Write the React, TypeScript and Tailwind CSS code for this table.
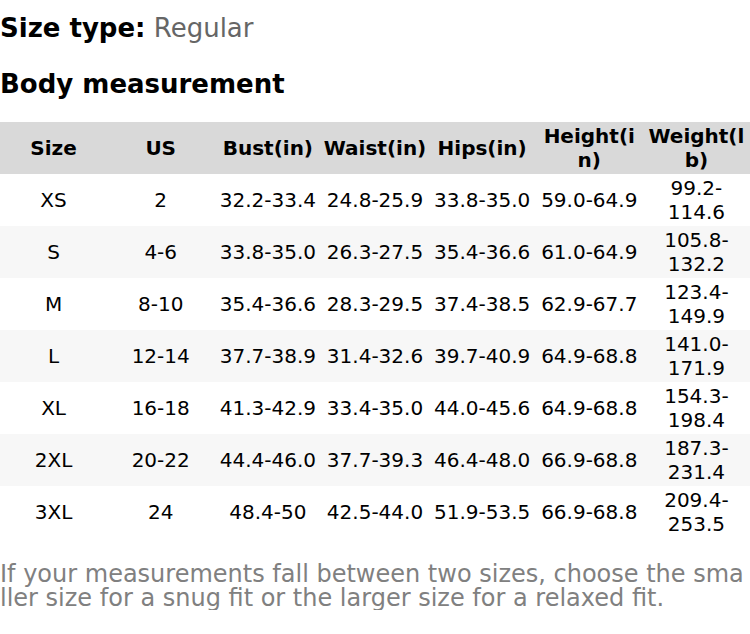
const rows = [
  ['XS', '2', '32.2-33.4', '24.8-25.9', '33.8-35.0', '59.0-64.9', '99.2-114.6'],
  ['S', '4-6', '33.8-35.0', '26.3-27.5', '35.4-36.6', '61.0-64.9', '105.8-132.2'],
  ['M', '8-10', '35.4-36.6', '28.3-29.5', '37.4-38.5', '62.9-67.7', '123.4-149.9'],
  ['L', '12-14', '37.7-38.9', '31.4-32.6', '39.7-40.9', '64.9-68.8', '141.0-171.9'],
  ['XL', '16-18', '41.3-42.9', '33.4-35.0', '44.0-45.6', '64.9-68.8', '154.3-198.4'],
  ['2XL', '20-22', '44.4-46.0', '37.7-39.3', '46.4-48.0', '66.9-68.8', '187.3-231.4'],
  ['3XL', '24', '48.4-50', '42.5-44.0', '51.9-53.5', '66.9-68.8', '209.4-253.5'],
];

const headers = ['Size', 'US', 'Bust(in)', 'Waist(in)', 'Hips(in)', 'Height(in)', 'Weight(lb)'];

export default function App() {
  return (
    <div className="w-[750px] bg-white text-black font-['DejaVu_Sans',sans-serif]">
      <p className="pt-[12px] text-[26px] leading-[32px]">
        <span className="font-bold">Size type:</span> <span className="text-[#666666]">Regular</span>
      </p>
      <h2 className="mt-[24px] text-[26px] leading-[32px] font-bold">Body measurement</h2>

      <table className="mt-[22px] w-full table-fixed border-collapse text-[20px] leading-[24px]">
        <thead>
          <tr className="h-[52px] bg-[#d9d9d9]">
            {headers.map((h) => (
              <th key={h} className="px-[1px] py-0.5 text-center font-bold break-all">
                {h}
              </th>
            ))}
          </tr>
        </thead>
        <tbody>
          {rows.map((row, i) => (
            <tr key={row[0]} className={i % 2 === 1 ? 'h-[52px] bg-[#f7f7f7]' : 'h-[52px] bg-white'}>
              {row.map((cell, j) => (
                <td key={j} className="px-[1px] py-0.5 text-center">
                  {cell}
                </td>
              ))}
            </tr>
          ))}
        </tbody>
      </table>

      <p className="mt-[24px] text-[24px] leading-[24px] text-[#808080] break-all">
        If your measurements fall between two sizes, choose the smaller size for a snug fit or the larger size for a relaxed fit.
      </p>
    </div>
  );
}
